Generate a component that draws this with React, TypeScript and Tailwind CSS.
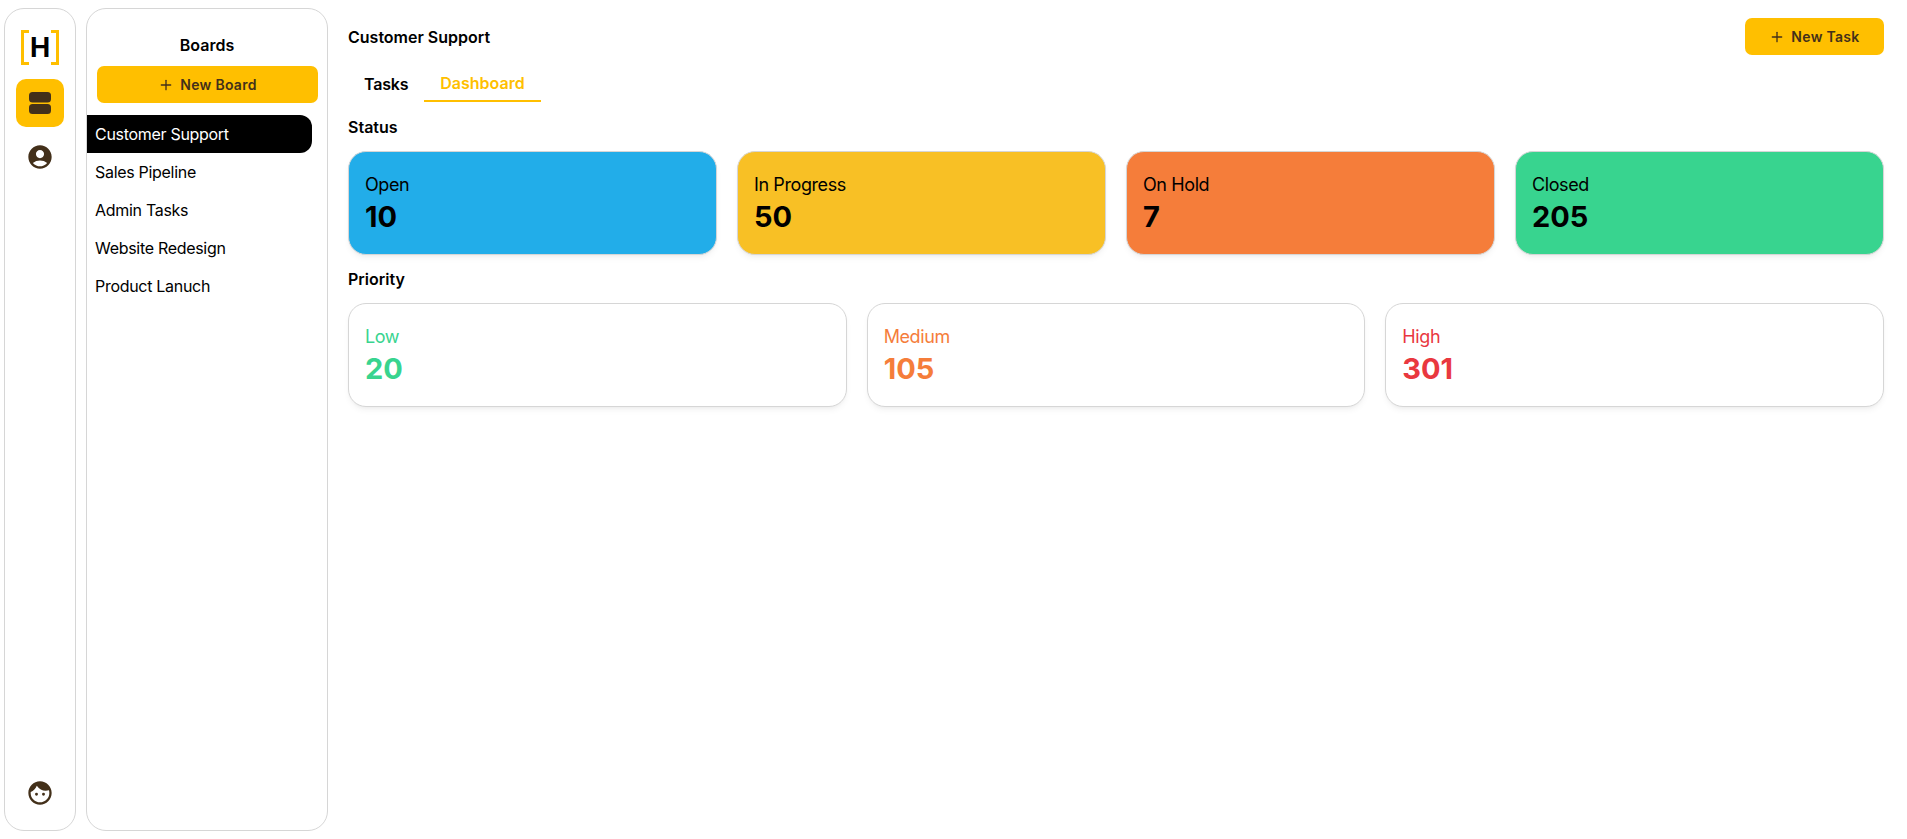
import { Plus } from 'lucide-react';
import { MdAccountCircle, MdFace } from 'react-icons/md';

const boards = ['Customer Support', 'Sales Pipeline', 'Admin Tasks', 'Website Redesign', 'Product Lanuch'];

const statusCards = [
  { label: 'Open', value: 10, color: 'bg-[#22ade9]' },
  { label: 'In Progress', value: 50, color: 'bg-[#f8c025]' },
  { label: 'On Hold', value: 7, color: 'bg-[#f57d3a]' },
  { label: 'Closed', value: 205, color: 'bg-[#38d48f]' },
];

const priorityCards = [
  { label: 'Low', value: 20, color: 'text-[#38d48f]' },
  { label: 'Medium', value: 105, color: 'text-[#f57d3a]' },
  { label: 'High', value: 301, color: 'text-[#e9383f]' },
];

function Logo() {
  return (
    <div className="flex h-[35px] w-[38px] items-center justify-center border-x-[3px] border-[#ffbf00] relative">
      <span className="absolute left-0 top-0 h-[3px] w-[5px] bg-[#ffbf00]" />
      <span className="absolute left-0 bottom-0 h-[3px] w-[5px] bg-[#ffbf00]" />
      <span className="absolute right-0 top-0 h-[3px] w-[5px] bg-[#ffbf00]" />
      <span className="absolute right-0 bottom-0 h-[3px] w-[5px] bg-[#ffbf00]" />
      <span className="text-[27px] font-bold leading-none text-black">H</span>
    </div>
  );
}

function Rail() {
  return (
    <aside className="flex w-[72px] shrink-0 flex-col items-center rounded-[20px] border border-[#d6d6d6] pt-[21px] pb-[23px]">
      <Logo />
      <div className="mt-[14px] flex h-12 w-12 items-center justify-center rounded-[10px] bg-[#ffbf00]">
        <svg width="22" height="22" viewBox="0 0 22 22" fill="#43301a">
          <rect x="0" y="0" width="22" height="10.5" rx="3.5" />
          <rect x="0" y="12" width="22" height="10" rx="3.5" />
        </svg>
      </div>
      <MdAccountCircle className="mt-4 text-[#43301a]" size={28} />
      <MdFace className="mt-auto text-[#43301a]" size={28} />
    </aside>
  );
}

function BoardsPanel() {
  return (
    <aside className="flex w-[242px] shrink-0 flex-col rounded-[20px] border border-[#d6d6d6] pt-[24px]">
      <h2 className="text-center text-base leading-6 font-semibold text-black">Boards</h2>
      <button className="mr-[9px] ml-[10px] mt-[9px] flex h-[37px] items-center justify-center gap-1.5 rounded-[7px] bg-[#ffbf00] text-sm font-semibold tracking-[0.3px] text-[#43301a]">
        <Plus size={16} />
        New Board
      </button>
      <ul className="mt-3 flex flex-col tracking-[-0.3px]">
        {boards.map((name, i) => (
          <li
            key={name}
            className={
              i === 0
                ? 'flex h-[38px] w-[225px] items-center rounded-r-xl bg-black pl-2 text-white'
                : 'flex h-[38px] w-[225px] items-center pl-2 text-black'
            }
          >
            {name}
          </li>
        ))}
      </ul>
    </aside>
  );
}

function Dashboard() {
  return (
    <main className="min-w-0 flex-1 pt-[10px]">
      <div className="flex items-center justify-between">
        <h1 className="text-base font-semibold text-black">Customer Support</h1>
        <button className="flex h-[37px] w-[139px] items-center justify-center gap-1.5 rounded-[7px] bg-[#ffbf00] text-sm font-semibold tracking-[0.3px] text-[#43301a]">
          <Plus size={16} />
          New Task
        </button>
      </div>

      <div className="mt-[10px] flex text-base font-semibold">
        <div className="flex h-[37px] items-center px-4 tracking-[-0.2px] text-black">Tasks</div>
        <div className="flex h-[37px] items-center border-b-2 border-[#ffbf00] px-4 text-[#ffbf00]">Dashboard</div>
      </div>

      <h3 className="mt-[13px] text-base leading-6 font-semibold text-black">Status</h3>
      <div className="mt-3 grid grid-cols-4 gap-5">
        {statusCards.map((card) => (
          <div key={card.label} className={`h-[104px] rounded-[18px] border border-[#d6d6d6] pl-4 pt-[19px] shadow-md shadow-black/5 ${card.color}`}>
            <div className="text-lg leading-7 tracking-[-0.4px] text-black">{card.label}</div>
            <div className="text-[29px] leading-9 font-bold text-black">{card.value}</div>
          </div>
        ))}
      </div>

      <h3 className="mt-3 text-base leading-6 font-semibold text-black">Priority</h3>
      <div className="mt-3 grid grid-cols-3 gap-5">
        {priorityCards.map((card) => (
          <div key={card.label} className={`h-[104px] rounded-[18px] border border-[#d6d6d6] bg-white pl-4 pt-[19px] shadow-md shadow-black/5 ${card.color}`}>
            <div className="text-lg leading-7 tracking-[-0.4px]">{card.label}</div>
            <div className="text-[29px] leading-9 font-bold">{card.value}</div>
          </div>
        ))}
      </div>
    </main>
  );
}

export default function App() {
  return (
    <div className="flex h-[839px] bg-white py-2 pr-[23px] pl-1 font-['Inter',sans-serif]">
      <Rail />
      <div className="ml-[10px] mr-5 flex">
        <BoardsPanel />
      </div>
      <Dashboard />
    </div>
  );
}
